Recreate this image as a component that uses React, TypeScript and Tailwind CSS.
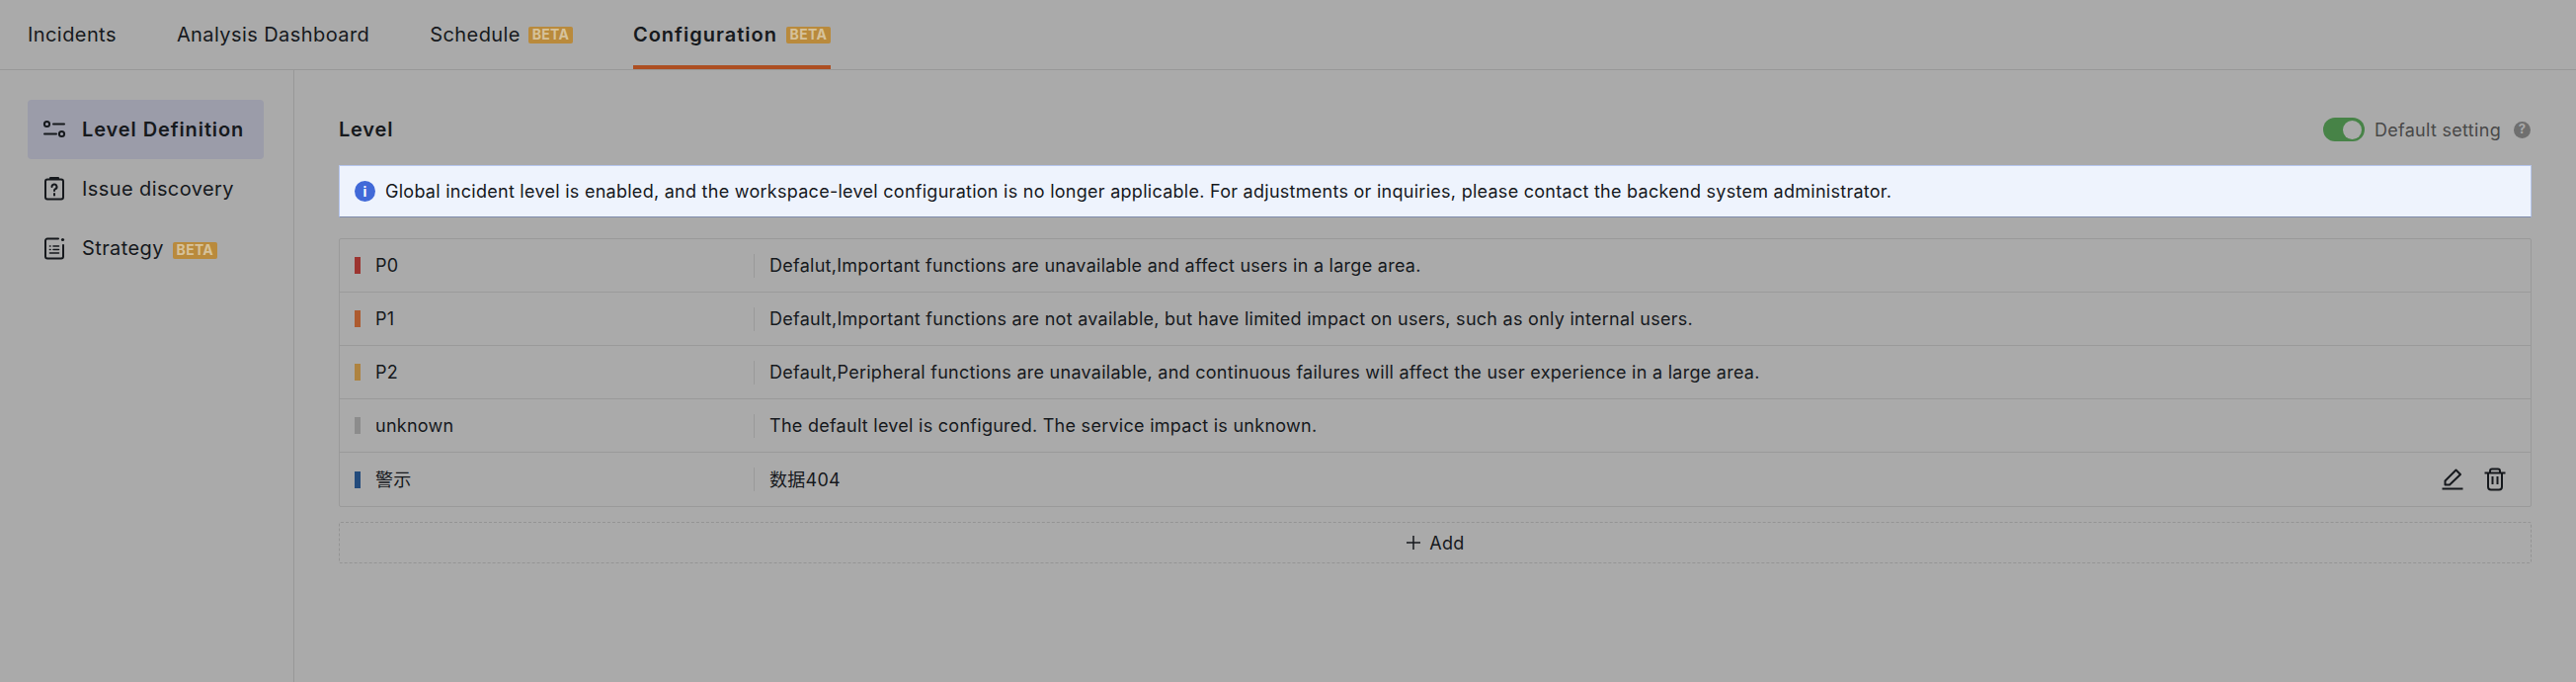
import React from "react";

const sans = "font-['Inter','Noto_Sans_CJK_SC',sans-serif]";

const levels = [
  { name: "P0", color: "bg-[#9c3430]", text: "Defalut,Important functions are unavailable and affect users in a large area." },
  { name: "P1", color: "bg-[#ad5b2f]", text: "Default,Important functions are not available, but have limited impact on users, such as only internal users." },
  { name: "P2", color: "bg-[#ae8340]", text: "Default,Peripheral functions are unavailable, and continuous failures will affect the user experience in a large area." },
  { name: "unknown", color: "bg-[#8c8c8c]", text: "The default level is configured. The service impact is unknown." },
  { name: "警示", color: "bg-[#234b7c]", text: "数据404", actions: true },
];

function Beta() {
  return (
    <span className="inline-flex items-center justify-center w-[45px] h-[17px] rounded-[2px] bg-[#b98a3c] text-[#d6c29b] text-[14px] font-bold tracking-[0.3px] leading-none">
      BETA
    </span>
  );
}

function SlidersIcon() {
  return (
    <svg width="24" height="24" viewBox="0 0 24 24" fill="none" stroke="#16191d" strokeWidth="2" strokeLinecap="round">
      <circle cx="4.5" cy="6.5" r="2.6" />
      <path d="M11 6.5h11" />
      <path d="M2 16.5h12" />
      <circle cx="19.5" cy="16.5" r="2.6" />
    </svg>
  );
}

function ClipboardIcon() {
  return (
    <svg width="24" height="24" viewBox="0 0 24 24" fill="none" stroke="#16191d" strokeWidth="2" strokeLinejoin="round">
      <rect x="3" y="2.5" width="18" height="20" rx="2" />
      <path d="M8 2.5V1h8v1.5" />
      <path d="M9.5 10a2.5 2.5 0 1 1 3.6 2.2c-.8.4-1.1.9-1.1 1.8" strokeLinecap="round" />
      <path d="M12 17v1.5" strokeLinecap="round" />
    </svg>
  );
}

function StrategyIcon() {
  return (
    <svg width="24" height="24" viewBox="0 0 24 24" fill="none" stroke="#16191d" strokeWidth="2" strokeLinecap="round">
      <path d="M16 2.5H5a2 2 0 0 0-2 2v16a2 2 0 0 0 2 2h14a2 2 0 0 0 2-2V9" />
      <circle cx="20.5" cy="3.5" r="1.6" fill="#16191d" stroke="none" />
      <path d="M7.5 10h.5M11 10h5.5M7.5 13.5h.5M11 13.5h5.5M7.5 17h9" strokeWidth="1.6" />
    </svg>
  );
}

function PencilIcon() {
  return (
    <svg width="22" height="24" viewBox="0 0 22 24" fill="none" stroke="#16191d" strokeWidth="2" strokeLinejoin="round">
      <path d="M3.5 17.5v-4L14.5 2.5l4.5 4.5L8 17.5z" />
      <path d="M0.5 21.5h21" />
    </svg>
  );
}

function TrashIcon() {
  return (
    <svg width="22" height="24" viewBox="0 0 22 24" fill="none" stroke="#16191d" strokeWidth="2" strokeLinejoin="round">
      <path d="M0.5 5.5h21" />
      <path d="M6 5.5V3.5a2 2 0 0 1 2-2h6a2 2 0 0 1 2 2v2" />
      <path d="M4 5.5v14a3 3 0 0 0 3 3h8a3 3 0 0 0 3-3v-14" />
      <path d="M8.5 9v8M13.5 9v8" />
    </svg>
  );
}

export default function App() {
  return (
    <div className={`${sans} w-[2608px] h-[690px] bg-[#aaaaaa] text-[#16191d] flex flex-col overflow-hidden`}>
      {/* Top tabs */}
      <div className="h-[71px] flex-none border-b border-[#989898] flex items-stretch pl-[28px] gap-[61px] text-[20px] tracking-[0.42px]">
        <div className="flex items-center">Incidents</div>
        <div className="flex items-center">Analysis Dashboard</div>
        <div className="flex items-center gap-[8px]">Schedule<Beta /></div>
        <div className="flex items-center gap-[9px] font-semibold tracking-[1px] border-b-[4px] border-[#ad4f22] pt-[4px]">Configuration<Beta /></div>
      </div>

      <div className="flex-1 flex min-h-0">
        {/* Side menu */}
        <div className="w-[298px] flex-none border-r border-[#989898] pl-[28px] pr-[30px] pt-[30px] text-[20px] tracking-[0.4px]">
          <div className="h-[60px] rounded-[4px] bg-[#9b9ca9] flex items-center pl-[15px] gap-[16px] font-semibold tracking-[0.9px]">
            <SlidersIcon />
            Level Definition
          </div>
          <div className="h-[60px] flex items-center pl-[15px] gap-[16px]">
            <ClipboardIcon />
            Issue discovery
          </div>
          <div className="h-[60px] flex items-center pl-[15px] gap-[16px]">
            <StrategyIcon />
            Strategy
            <span className="-ml-[7px]"><Beta /></span>
          </div>
        </div>

        {/* Main */}
        <div className="flex-1 pl-[45px] pr-[45px] pt-[30px]">
          <div className="h-[60px] flex items-center justify-between">
            <div className="text-[20px] font-semibold tracking-[0.8px]">Level</div>
            <div className="flex items-center text-[18px] tracking-[0.3px] text-[#484848] mr-[1px]">
              <div className="w-[42px] h-[24px] rounded-full bg-[#478347] flex items-center justify-end pr-[3px]">
                <div className="w-[19px] h-[19px] rounded-full bg-[#aaaaaa]" />
              </div>
              <span className="ml-[10px]">Default setting</span>
              <span className="ml-[13px] w-[17px] h-[17px] rounded-full bg-[#6f6f6f] text-[#aaaaaa] text-[13px] font-bold flex items-center justify-center">?</span>
            </div>
          </div>

          <div className="h-[53px] mt-[6px] bg-[#eef3fd] border border-[#b6c6ee] border-b-[#7f8cab] flex items-center pl-[15px] gap-[10px] text-[18px] tracking-[0.27px]">
            <span className="w-[21px] h-[21px] rounded-full bg-[#4169d8] text-white text-[14px] font-bold flex items-center justify-center">i</span>
            Global incident level is enabled, and the workspace-level configuration is no longer applicable. For adjustments or inquiries, please contact the backend system administrator.
          </div>

          {/* Levels table */}
          <div className="mt-[21px] border border-[#9a9a9a] rounded-[2px] text-[18px] tracking-[0.27px]">
            {levels.map((l) => (
              <div key={l.name} className="h-[54px] flex items-center border-b border-[#9a9a9a] last:border-b-0">
                <div className="w-[420px] h-[24px] flex-none flex items-center pl-[15px] border-r border-[#9a9a9a]">
                  <span className={`w-[6px] h-[17px] ${l.color}`} />
                  <span className="ml-[15px]">{l.name}</span>
                </div>
                <div className="flex-1 pl-[15px]">{l.text}</div>
                {l.actions && (
                  <div className="flex items-center gap-[21px] pr-[25px]">
                    <PencilIcon />
                    <TrashIcon />
                  </div>
                )}
              </div>
            ))}
          </div>

          <div className="mt-[15px] h-[42px] border border-dashed border-[#949494] rounded-[2px] flex items-center justify-center gap-[8px] text-[18px] tracking-[0.27px]">
            <svg width="16" height="16" viewBox="0 0 16 16" stroke="#16191d" strokeWidth="1.5"><path d="M8 1v14M1 8h14" /></svg>
            Add
          </div>
        </div>
      </div>
    </div>
  );
}
